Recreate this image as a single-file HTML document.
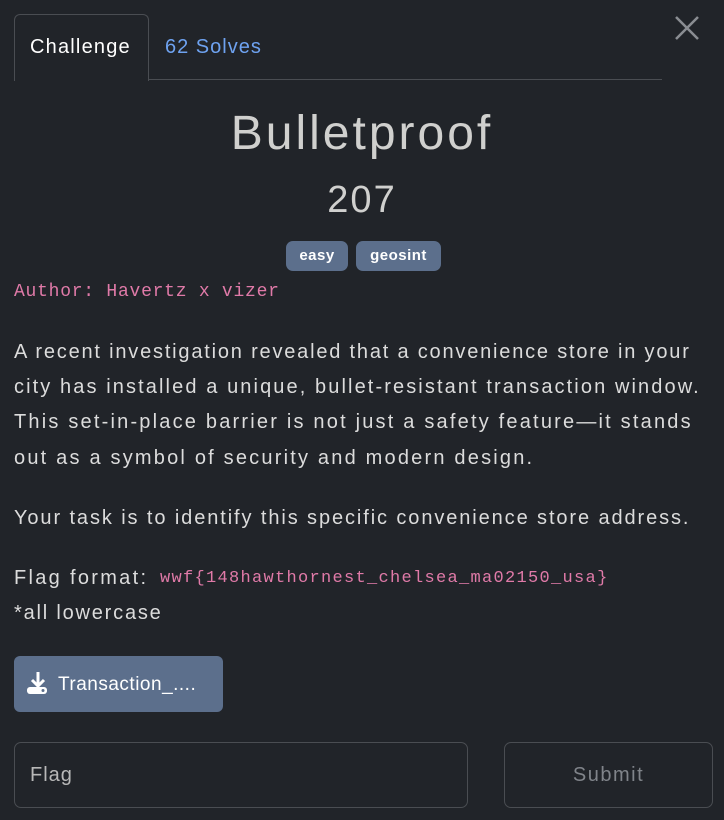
<!DOCTYPE html>
<html><head><meta charset="utf-8"><style>
*{margin:0;padding:0;box-sizing:border-box}
body{width:724px;height:820px;background:#212429;font-family:"Liberation Sans",sans-serif;color:#d4d4d4;position:relative;overflow:hidden}
.a{position:absolute;white-space:nowrap}
.tab{left:14px;top:14px;width:135px;height:67px;border:1px solid #4a4d52;border-bottom:none;border-radius:6px 6px 0 0;background:#212429}
.line{left:148px;top:79px;width:514px;height:1px;background:#4a4d52}
.mono{font-family:"Liberation Mono",monospace;color:#e07aa8}
.p{font-size:20px;color:#dcdcdc;left:14px}
.badge{top:241px;height:30px;background:#5c6f8c;border-radius:7px;color:#fff;font-weight:bold;font-size:15px;line-height:30px;text-align:center;letter-spacing:0.5px}
</style></head><body>
<div class="a tab"></div>
<div class="a line"></div>
<div class="a" style="left:30px;top:36px;font-size:20px;color:#fff;letter-spacing:1.2px">Challenge</div>
<div class="a" style="left:165px;top:36px;font-size:20px;color:#6ea2f0;letter-spacing:1px">62 Solves</div>
<svg class="a" style="left:674px;top:15px" width="26" height="26" viewBox="0 0 26 26"><path d="M2 2L24 24M24 2L2 24" stroke="#8a8d92" stroke-width="2.5"/></svg>
<div class="a" style="left:0;width:724px;text-align:center;top:106px;font-size:48px;color:#d0d0ce;letter-spacing:3px">Bulletproof</div>
<div class="a" style="left:0;width:724px;text-align:center;top:179px;font-size:38px;color:#d0d0ce;letter-spacing:2px">207</div>
<div class="a badge" style="left:286px;width:62px">easy</div>
<div class="a badge" style="left:356px;width:85px">geosint</div>
<div class="a mono" style="left:14px;top:282px;font-size:18px;letter-spacing:0.75px">Author: Havertz x vizer</div>
<div class="a p" style="top:341px;letter-spacing:1.8px">A recent investigation revealed that a convenience store in your</div>
<div class="a p" style="top:376px;letter-spacing:2.1px">city has installed a unique, bullet-resistant transaction window.</div>
<div class="a p" style="top:411px;letter-spacing:2.2px">This set-in-place barrier is not just a safety feature—it stands</div>
<div class="a p" style="top:447px;letter-spacing:2.2px">out as a symbol of security and modern design.</div>
<div class="a p" style="top:507px;letter-spacing:1.9px">Your task is to identify this specific convenience store address.</div>
<div class="a p" style="top:567px;letter-spacing:2.3px">Flag format:</div>
<div class="a mono" style="left:160px;top:569px;font-size:17px;letter-spacing:1.3px">wwf{148hawthornest_chelsea_ma02150_usa}</div>
<div class="a p" style="top:602px;letter-spacing:1.8px">*all lowercase</div>
<div class="a" style="left:14px;top:656px;width:209px;height:56px;background:#5c6f8c;border-radius:6px"></div>
<svg class="a" style="left:26px;top:671px" width="24" height="24" viewBox="0 0 24 24"><path d="M12 1v13M6 9l6 6 6-6" stroke="#fff" stroke-width="3" fill="none"/><rect x="1" y="16" width="20" height="7" rx="3" fill="#fff"/><circle cx="17" cy="19.5" r="1.5" fill="#5c6f8c"/></svg>
<div class="a" style="left:58px;top:674px;font-size:19px;color:#fff;letter-spacing:0.5px">Transaction_....</div>
<div class="a" style="left:14px;top:742px;width:454px;height:66px;border:1px solid #4a4d52;border-radius:7px"></div>
<div class="a" style="left:30px;top:764px;font-size:20px;color:#b8b8b8;letter-spacing:1px">Flag</div>
<div class="a" style="left:504px;top:742px;width:209px;height:66px;border:1px solid #4a4d52;border-radius:7px;text-align:center;line-height:64px;font-size:20px;color:#80848a;letter-spacing:1.5px">Submit</div>
</body></html>
